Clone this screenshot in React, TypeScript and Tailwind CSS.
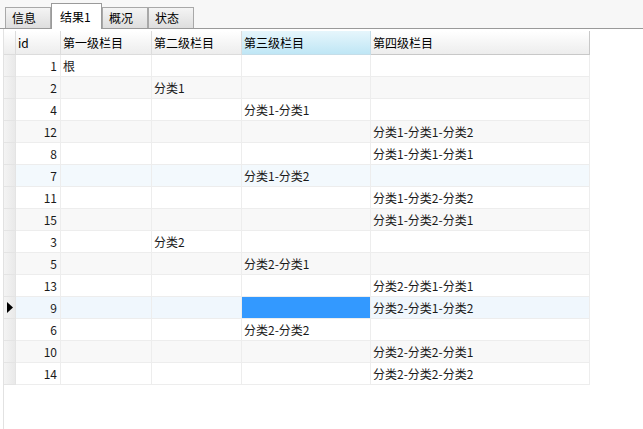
import React from "react";

const font = { fontFamily: '"Noto Sans CJK SC", "Liberation Sans", sans-serif' };

const rows: [string, string, string, string, string][] = [
  ["1", "根", "", "", ""],
  ["2", "", "分类1", "", ""],
  ["4", "", "", "分类1-分类1", ""],
  ["12", "", "", "", "分类1-分类1-分类2"],
  ["8", "", "", "", "分类1-分类1-分类1"],
  ["7", "", "", "分类1-分类2", ""],
  ["11", "", "", "", "分类1-分类2-分类2"],
  ["15", "", "", "", "分类1-分类2-分类1"],
  ["3", "", "分类2", "", ""],
  ["5", "", "", "分类2-分类1", ""],
  ["13", "", "", "", "分类2-分类1-分类1"],
  ["9", "", "", "", "分类2-分类1-分类2"],
  ["6", "", "", "分类2-分类2", ""],
  ["10", "", "", "", "分类2-分类2-分类1"],
  ["14", "", "", "", "分类2-分类2-分类2"],
];

const cols = "grid grid-cols-[12px_45px_91px_90px_129px_219px]";

function Tab({ label, active }: { label: string; active?: boolean }) {
  if (active) {
    return (
      <div className="relative z-10 -mb-px flex h-[26px] w-[51px] items-center border border-b-0 border-[#9a9a9a] bg-white pl-[8px] text-[12px] text-black">
        {label}
      </div>
    );
  }
  return (
    <div className="flex h-[21px] w-[46px] items-center border border-b-0 border-[#a8a8a8] bg-gradient-to-b from-[#f4f4f4] to-[#dedede] pl-[6px] text-[12px] text-black">
      {label}
    </div>
  );
}

export default function App() {
  return (
    <div className="h-[429px] w-[643px] overflow-hidden bg-white" style={font}>
      <div className="flex h-[29px] items-end border-b border-[#9a9a9a] bg-[#f7f7f7] pl-[5px]">
        <Tab label="信息" />
        <Tab label="结果1" active />
        <Tab label="概况" />
        <Tab label="状态" />
      </div>
      <div className="ml-[3px] h-[400px] border-l border-[#e2e2e2] pt-[2px]">
        <div className={`${cols} h-[24px] w-[586px] text-[12px] text-black`}>
          <div className="border-r border-b border-[#dcdcdc] bg-gradient-to-b from-white to-[#ededed]" />
          <div className="flex items-center border-r border-b border-[#dcdcdc] bg-gradient-to-b from-white to-[#ededed] pl-[2px]">id</div>
          <div className="flex items-center border-r border-b border-[#dcdcdc] bg-gradient-to-b from-white to-[#ededed] pl-[2px]">第一级栏目</div>
          <div className="flex items-center border-r border-b border-[#dcdcdc] bg-gradient-to-b from-white to-[#ededed] pl-[2px]">第二级栏目</div>
          <div className="flex items-center border-r border-b border-[#c5dde8] bg-gradient-to-b from-[#e6f6fc] to-[#bfe6f5] pl-[2px]">第三级栏目</div>
          <div className="flex items-center border-r border-b border-[#c8c8c8] bg-gradient-to-b from-white to-[#ededed] pl-[2px]">第四级栏目</div>
        </div>
        {rows.map((r, i) => {
          const selected = r[0] === "9";
          const hover = r[0] === "7";
          const bg = selected ? "bg-[#f0f7fd]" : hover ? "bg-[#f3f9fd]" : i % 2 === 1 ? "bg-[#f8f8f8]" : "bg-white";
          return (
            <div key={i} className={`${cols} h-[22px] w-[586px] text-[12px] text-[#1a1a1a] ${bg}`}>
              <div className="flex items-center border-r border-b border-[#e4e4e4] bg-gradient-to-r from-[#f4f4f4] to-[#e9e9e9]">
                {selected && (
                  <svg width="6" height="11" viewBox="0 0 6 11" className="ml-[3px]">
                    <path d="M0 0 L6 5.5 L0 11 Z" fill="#000" />
                  </svg>
                )}
              </div>
              <div className="flex items-center justify-end border-r border-b border-[#ededed] pr-[3px]">{r[0]}</div>
              <div className="flex items-center border-r border-b border-[#ededed] pl-[2px]">{r[1]}</div>
              <div className="flex items-center border-r border-b border-[#ededed] pl-[2px]">{r[2]}</div>
              <div className={`flex items-center border-r border-b border-[#ededed] pl-[2px] ${selected ? "bg-[#3399ff]" : ""}`}>{r[3]}</div>
              <div className="flex items-center border-r border-b border-[#ededed] pl-[2px]">{r[4]}</div>
            </div>
          );
        })}
      </div>
    </div>
  );
}
